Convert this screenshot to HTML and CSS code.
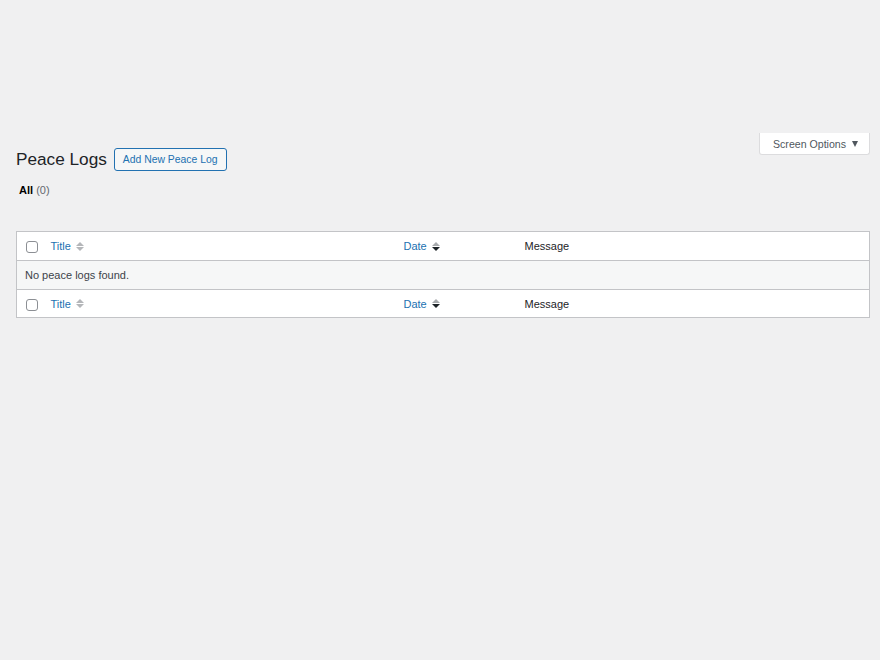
FILE: index.html
```html
<!DOCTYPE html>
<html lang="en">
<head>
<meta charset="UTF-8">
<meta name="viewport" content="width=device-width, initial-scale=1.0">
<title>Peace Logs</title>
<link rel="stylesheet" href="styles.css">
</head>
<body>
  <div class="screen-meta-links">
    <button class="screen-options">Screen Options <span class="caret"></span></button>
  </div>

  <div class="wrap">
    <div class="heading-row">
      <h1>Peace Logs</h1>
      <a href="#" class="page-title-action">Add New Peace Log</a>
    </div>

    <ul class="subsubsub">
      <li><a href="#" class="current">All</a> <span class="count">(0)</span></li>
    </ul>

    <table class="list-table">
      <colgroup>
        <col class="col-cb">
        <col class="col-title">
        <col class="col-date">
        <col>
      </colgroup>
      <thead>
        <tr>
          <td class="check-column"><span class="checkbox"></span></td>
          <th><a href="#" class="sort-link">Title <span class="sorting-indicator"><span class="up"></span><span class="down"></span></span></a></th>
          <th><a href="#" class="sort-link">Date <span class="sorting-indicator sorted"><span class="up"></span><span class="down"></span></span></a></th>
          <th>Message</th>
        </tr>
      </thead>
      <tbody>
        <tr class="no-items">
          <td colspan="4">No peace logs found.</td>
        </tr>
      </tbody>
      <tfoot>
        <tr>
          <td class="check-column"><span class="checkbox"></span></td>
          <th><a href="#" class="sort-link">Title <span class="sorting-indicator"><span class="up"></span><span class="down"></span></span></a></th>
          <th><a href="#" class="sort-link">Date <span class="sorting-indicator sorted"><span class="up"></span><span class="down"></span></span></a></th>
          <th>Message</th>
        </tr>
      </tfoot>
    </table>
  </div>
</body>
</html>
```

FILE: styles.css
```css
body {
  margin: 0;
  padding: 0;
  background-color: #f0f0f1;
  font-family: "Liberation Sans", Arial, sans-serif;
  font-size: 11px;
  color: #1d2327;
}

a {
  color: #2271b1;
  text-decoration: none;
}

.screen-meta-links {
  display: flex;
  justify-content: flex-end;
  padding: 133px 10px 0 0;
  height: 22px;
}

.screen-options {
  display: flex;
  align-items: center;
  justify-content: center;
  font-family: inherit;
  font-size: 10.6px;
  color: #50575e;
  background: #fff;
  border: 1px solid #dcdcde;
  border-top: none;
  border-radius: 0 0 3px 3px;
  width: 111px;
  height: 22px;
  padding: 0 0 0 2px;
}

.screen-options .caret {
  width: 0;
  height: 0;
  margin-left: 6px;
  border-left: 3.5px solid transparent;
  border-right: 3.5px solid transparent;
  border-top: 6px solid #50575e;
}

.wrap {
  margin: -8px 10px 0 16px;
}

.heading-row {
  display: flex;
  align-items: center;
  gap: 7px;
}

h1 {
  font-size: 17.2px;
  font-weight: 400;
  margin: 0;
  line-height: 24px;
  color: #1d2327;
}

.page-title-action {
  display: inline-block;
  border: 1px solid #2271b1;
  border-radius: 3px;
  background: #f6f7f7;
  padding: 0 8px;
  line-height: 21px;
  font-size: 10.4px;
}

.subsubsub {
  list-style: none;
  margin: 11px 0 0 3px;
  padding: 0;
  color: #646970;
  line-height: 16px;
}

.subsubsub .current {
  color: #000;
  font-weight: 700;
}

.list-table {
  width: 100%;
  margin-top: 33px;
  border-collapse: collapse;
  table-layout: fixed;
  background: #fff;
  border: 1px solid #c3c4c7;
}

.col-cb {
  width: 26px;
}

.col-title {
  width: 353px;
}

.col-date {
  width: 121px;
}

.list-table th,
.list-table td {
  text-align: left;
  font-weight: 400;
  padding: 0 8px;
  height: 28px;
  line-height: 16px;
  font-size: 11px;
  vertical-align: middle;
}

.list-table thead tr {
  border-bottom: 1px solid #c3c4c7;
}

.list-table tfoot tr {
  border-top: 1px solid #c3c4c7;
}

.list-table tfoot th,
.list-table tfoot td {
  height: 27px;
}

.list-table .check-column {
  padding: 0 0 0 9px;
}

.checkbox {
  display: block;
  width: 10px;
  height: 10px;
  margin-top: 2px;
  border: 1px solid #8c8f94;
  border-radius: 3px;
  background: #fff;
}

.no-items td {
  background: #f6f7f7;
  color: #3c434a;
}

.sort-link {
  display: inline-flex;
  align-items: center;
}

.sorting-indicator {
  display: inline-flex;
  flex-direction: column;
  margin-left: 5px;
  gap: 1px;
}

.sorting-indicator .up,
.sorting-indicator .down {
  width: 0;
  height: 0;
  border-left: 4px solid transparent;
  border-right: 4px solid transparent;
}

.sorting-indicator .up {
  border-bottom: 4px solid #b4b6b9;
}

.sorting-indicator .down {
  border-top: 4px solid #b4b6b9;
}

.sorting-indicator.sorted .up {
  border-bottom-color: #a7aaad;
}

.sorting-indicator.sorted .down {
  border-top-color: #1d2327;
}
```
